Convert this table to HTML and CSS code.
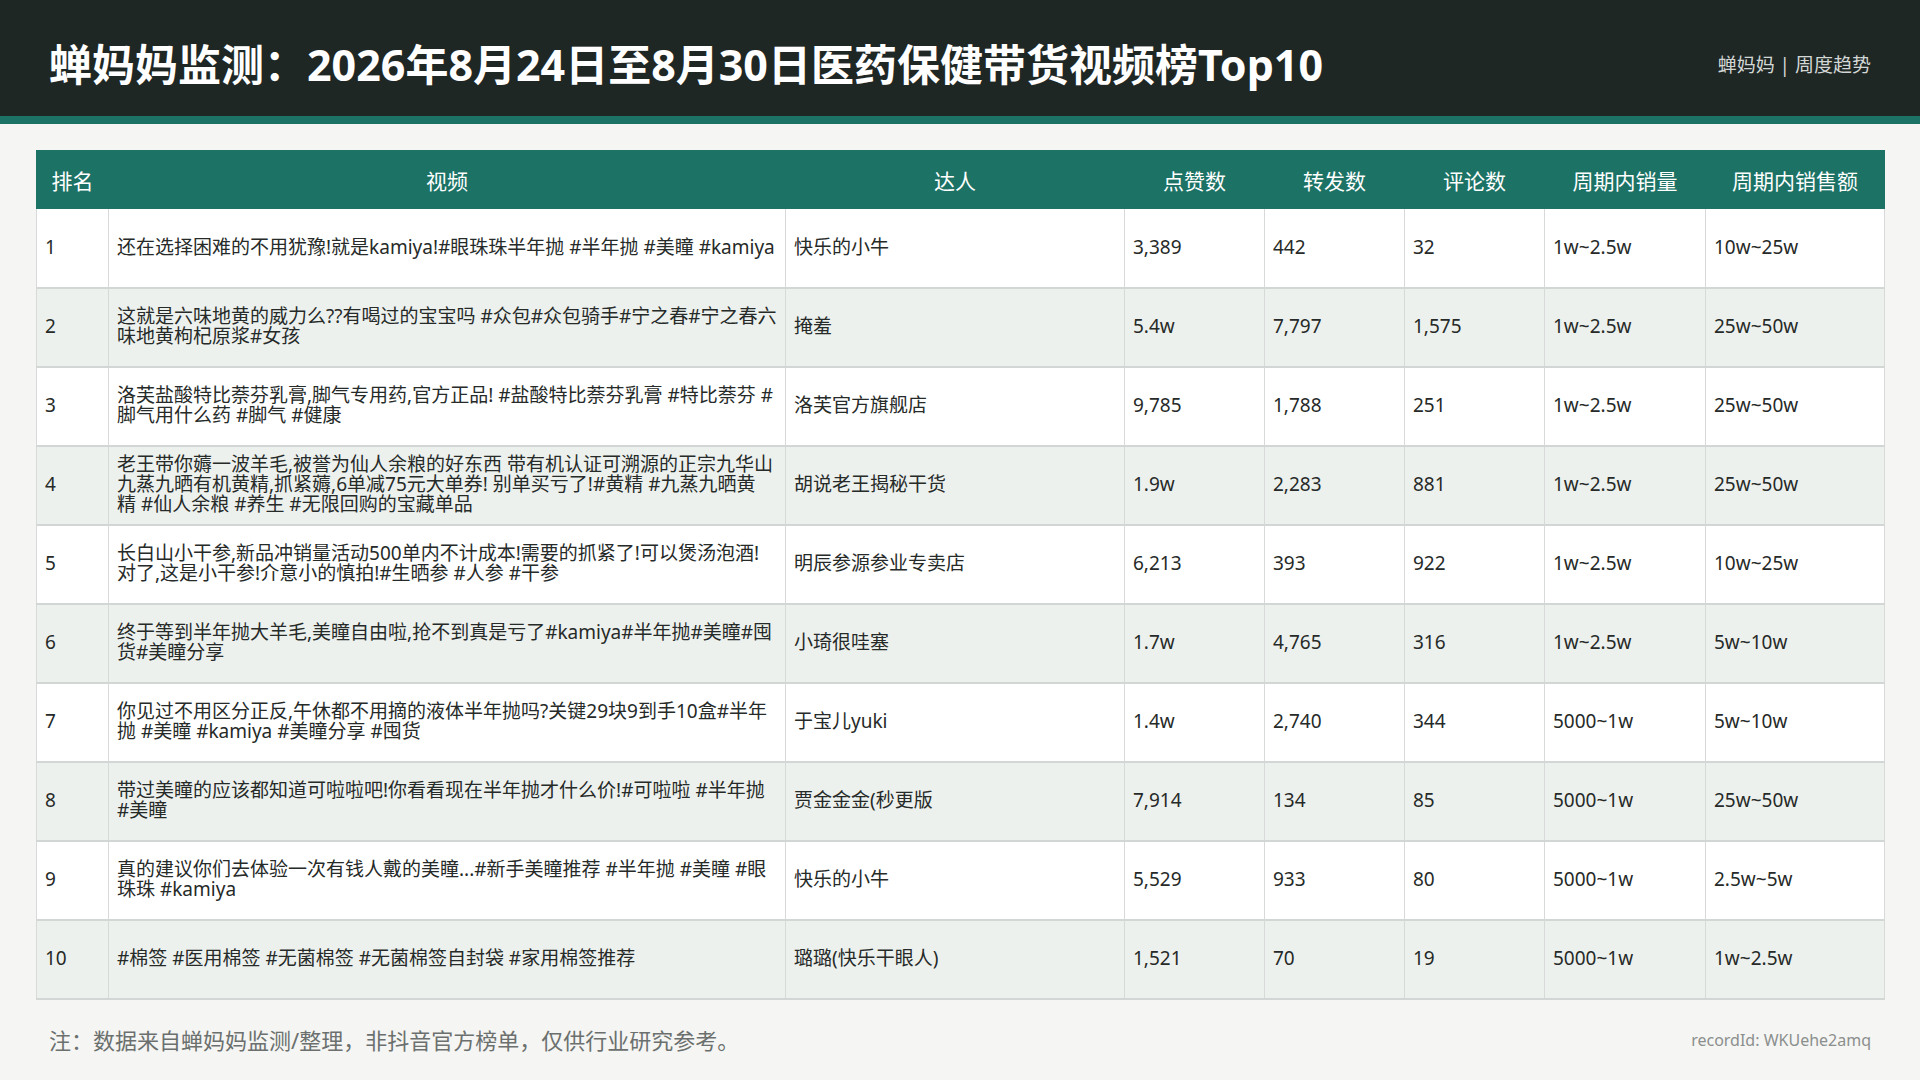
FILE: index.html
```html
<!DOCTYPE html>
<html lang="zh-CN">
<head>
<meta charset="utf-8">
<title>蝉妈妈监测 医药保健带货视频榜Top10</title>
<link rel="stylesheet" href="styles.css">
</head>
<body>
<header class="top">
  <h1 class="title">蝉妈妈监测：2026年8月24日至8月30日医药保健带货视频榜Top10</h1>
  <div class="brand">蝉妈妈 | 周度趋势</div>
</header>
<main class="main">
  <table class="rank">
    <colgroup>
      <col class="c-rank"><col class="c-video"><col class="c-talent"><col class="c-num"><col class="c-num"><col class="c-num"><col class="c-vol"><col class="c-amt">
    </colgroup>
    <thead>
      <tr><th>排名</th><th>视频</th><th>达人</th><th>点赞数</th><th>转发数</th><th>评论数</th><th>周期内销量</th><th>周期内销售额</th></tr>
    </thead>
    <tbody>
      <tr><td>1</td><td class="video">还在选择困难的不用犹豫!就是kamiya!#眼珠珠半年抛 #半年抛 #美瞳 #kamiya</td><td>快乐的小牛</td><td>3,389</td><td>442</td><td>32</td><td>1w~2.5w</td><td>10w~25w</td></tr>
      <tr><td>2</td><td class="video">这就是六味地黄的威力么??有喝过的宝宝吗 #众包#众包骑手#宁之春#宁之春六味地黄枸杞原浆#女孩</td><td>掩羞</td><td>5.4w</td><td>7,797</td><td>1,575</td><td>1w~2.5w</td><td>25w~50w</td></tr>
      <tr><td>3</td><td class="video">洛芙盐酸特比萘芬乳膏,脚气专用药,官方正品! #盐酸特比萘芬乳膏 #特比萘芬 #脚气用什么药 #脚气 #健康</td><td>洛芙官方旗舰店</td><td>9,785</td><td>1,788</td><td>251</td><td>1w~2.5w</td><td>25w~50w</td></tr>
      <tr><td>4</td><td class="video">老王带你薅一波羊毛,被誉为仙人余粮的好东西 带有机认证可溯源的正宗九华山九蒸九晒有机黄精,抓紧薅,6单减75元大单券! 别单买亏了!#黄精 #九蒸九晒黄精 #仙人余粮 #养生 #无限回购的宝藏单品</td><td>胡说老王揭秘干货</td><td>1.9w</td><td>2,283</td><td>881</td><td>1w~2.5w</td><td>25w~50w</td></tr>
      <tr><td>5</td><td class="video">长白山小干参,新品冲销量活动500单内不计成本!需要的抓紧了!可以煲汤泡酒!对了,这是小干参!介意小的慎拍!#生晒参 #人参 #干参</td><td>明辰参源参业专卖店</td><td>6,213</td><td>393</td><td>922</td><td>1w~2.5w</td><td>10w~25w</td></tr>
      <tr><td>6</td><td class="video">终于等到半年抛大羊毛,美瞳自由啦,抢不到真是亏了#kamiya#半年抛#美瞳#囤货#美瞳分享</td><td>小琦很哇塞</td><td>1.7w</td><td>4,765</td><td>316</td><td>1w~2.5w</td><td>5w~10w</td></tr>
      <tr><td>7</td><td class="video">你见过不用区分正反,午休都不用摘的液体半年抛吗?关键29块9到手10盒#半年抛 #美瞳 #kamiya #美瞳分享 #囤货</td><td>于宝儿yuki</td><td>1.4w</td><td>2,740</td><td>344</td><td>5000~1w</td><td>5w~10w</td></tr>
      <tr><td>8</td><td class="video">带过美瞳的应该都知道可啦啦吧!你看看现在半年抛才什么价!#可啦啦 #半年抛 #美瞳</td><td>贾金金金(秒更版</td><td>7,914</td><td>134</td><td>85</td><td>5000~1w</td><td>25w~50w</td></tr>
      <tr><td>9</td><td class="video">真的建议你们去体验一次有钱人戴的美瞳...#新手美瞳推荐 #半年抛 #美瞳 #眼珠珠 #kamiya</td><td>快乐的小牛</td><td>5,529</td><td>933</td><td>80</td><td>5000~1w</td><td>2.5w~5w</td></tr>
      <tr><td>10</td><td class="video">#棉签 #医用棉签 #无菌棉签 #无菌棉签自封袋 #家用棉签推荐</td><td>璐璐(快乐干眼人)</td><td>1,521</td><td>70</td><td>19</td><td>5000~1w</td><td>1w~2.5w</td></tr>
    </tbody>
  </table>
  <footer class="foot">
    <p class="note">注：数据来自蝉妈妈监测/整理，非抖音官方榜单，仅供行业研究参考。</p>
    <p class="record">recordId: WKUehe2amq</p>
  </footer>
</main>
</body>
</html>
```
FILE: styles.css
```css
* { box-sizing: border-box; }
html, body { margin: 0; padding: 0; }
body {
  width: 1920px;
  height: 1080px;
  background: #f5f5f3;
  font-family: "Noto Sans", "Noto Sans CJK SC", sans-serif;
  color: #262a28;
  overflow: hidden;
}
.top {
  height: 124px;
  background: #1f2725;
  border-bottom: 8px solid #1b7265;
  padding: 14px 49px 0 49px;
  display: flex;
  align-items: center;
  justify-content: space-between;
}
.title {
  margin: 0;
  font-size: 43px;
  font-weight: 700;
  color: #ffffff;
  line-height: 1.2;
  letter-spacing: 0;
}
.brand {
  font-size: 19px;
  color: #d3d8d6;
  line-height: 1.2;
}
.main {
  padding: 26px 36px 0 36px;
}
.rank {
  width: 1848px;
  table-layout: fixed;
  border-collapse: collapse;
  background: #ffffff;
}
.c-rank { width: 72px; }
.c-video { width: 677px; }
.c-talent { width: 339px; }
.c-num { width: 140px; }
.c-vol { width: 161px; }
.c-amt { width: 179px; }
.rank thead tr { height: 58px; background: #1b7265; }
.rank th {
  color: #ffffff;
  font-weight: 400;
  font-size: 21px;
  text-align: center;
  padding: 0 6px;
  border: 1px solid #1b7265;
}
.rank tbody tr { height: 79px; }
.rank tbody tr:nth-child(even) { background: #edf1ee; }
.rank td {
  font-size: 19px;
  line-height: 1.04;
  padding: 0 8px;
  vertical-align: middle;
  border-left: 1px solid #d7dad8;
  border-right: 1px solid #d7dad8;
  border-bottom: 2px solid #d2d6d4;
  color: #262a28;
}
.rank td.video {
  padding-right: 7px;
  word-break: break-all;
  white-space: break-spaces;
}
.foot {
  display: flex;
  justify-content: space-between;
  align-items: center;
  padding: 25px 13px 0 13px;
}
.note {
  margin: 0;
  font-size: 22px;
  color: #6b706e;
  line-height: 1.4;
}
.record {
  margin: 0;
  font-size: 16px;
  color: #8b8f8d;
  line-height: 1.4;
}
```
